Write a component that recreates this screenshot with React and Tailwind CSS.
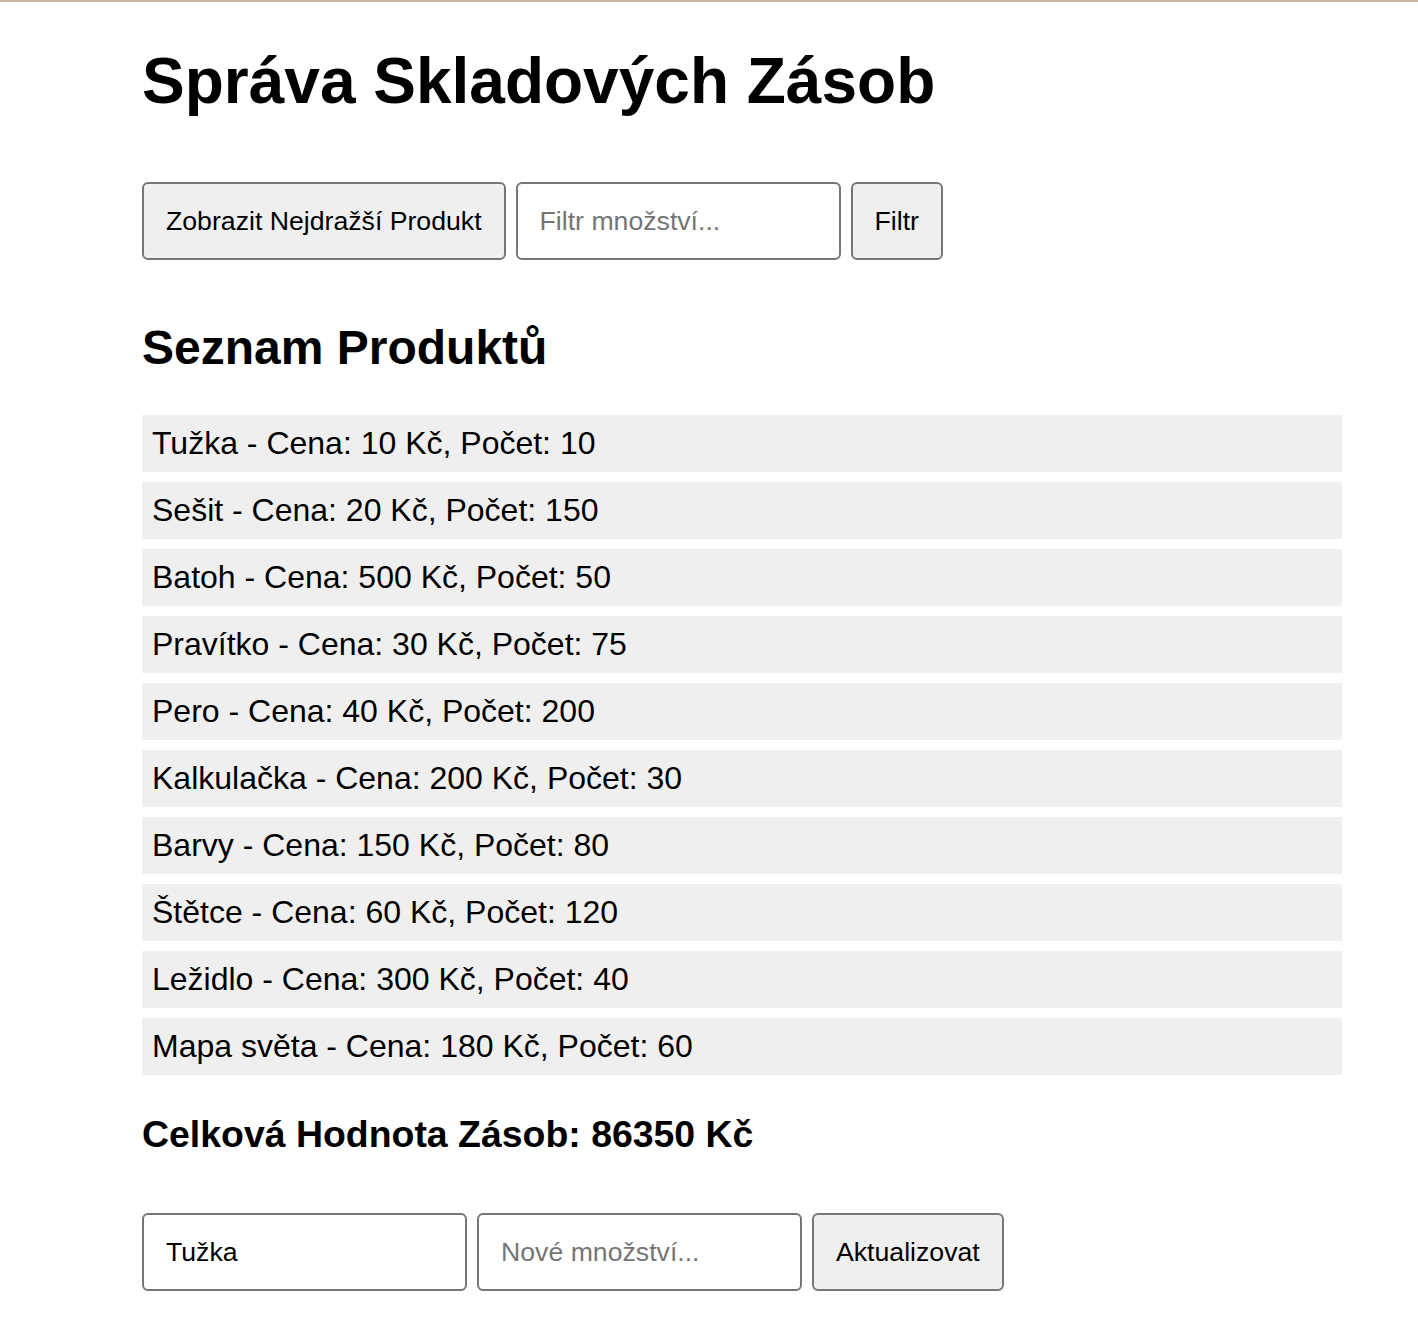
const PRODUCTS = [
  { name: 'Tužka', price: 10, qty: 10 },
  { name: 'Sešit', price: 20, qty: 150 },
  { name: 'Batoh', price: 500, qty: 50 },
  { name: 'Pravítko', price: 30, qty: 75 },
  { name: 'Pero', price: 40, qty: 200 },
  { name: 'Kalkulačka', price: 200, qty: 30 },
  { name: 'Barvy', price: 150, qty: 80 },
  { name: 'Štětce', price: 60, qty: 120 },
  { name: 'Ležidlo', price: 300, qty: 40 },
  { name: 'Mapa světa', price: 180, qty: 60 },
]

const btn = 'h-[78px] px-[22px] border-2 border-[#767676] rounded-[6px] bg-[#efefef] text-[26.67px] text-black'
const input = 'h-[78px] w-[325px] px-[22px] border-2 border-[#767676] rounded-[6px] bg-white text-[26.67px] text-black placeholder:text-[#757575] outline-none'

export default function App() {
  const total = PRODUCTS.reduce((sum, p) => sum + p.price * p.qty, 0)

  return (
    <div className="min-h-screen bg-white border-t-2 border-[#c9b99b] font-['Liberation_Sans',Arial,sans-serif] text-black">
      <div className="pl-[142px] w-[1342px]">
        <h1 className="pt-[42px] pb-[43px] text-[64px] font-bold leading-[normal]">Správa Skladových Zásob</h1>

        {/* Filter bar */}
        <div className="mt-[21px] flex gap-[10px]">
          <button className={btn}>Zobrazit Nejdražší Produkt</button>
          <input className={input} placeholder="Filtr množství..." />
          <button className={btn}>Filtr</button>
        </div>

        <h2 className="mt-[60px] mb-[40px] text-[48px] font-bold leading-[normal]">Seznam Produktů</h2>

        <ul className="flex flex-col gap-[10px]">
          {PRODUCTS.map((p) => (
            <li key={p.name} className="bg-[#efefef] px-[10px] py-[10px] text-[32px] leading-[normal]">
              {p.name} - Cena: {p.price} Kč, Počet: {p.qty}
            </li>
          ))}
        </ul>

        <h3 className="mt-[38px] text-[37.44px] font-bold leading-[normal]">Celková Hodnota Zásob: {total} Kč</h3>

        {/* Update bar */}
        <div className="mt-[57px] pb-[40px] flex gap-[10px]">
          <input className={input} defaultValue="Tužka" />
          <input className={input} placeholder="Nové množství..." />
          <button className={btn}>Aktualizovat</button>
        </div>
      </div>
    </div>
  )
}
